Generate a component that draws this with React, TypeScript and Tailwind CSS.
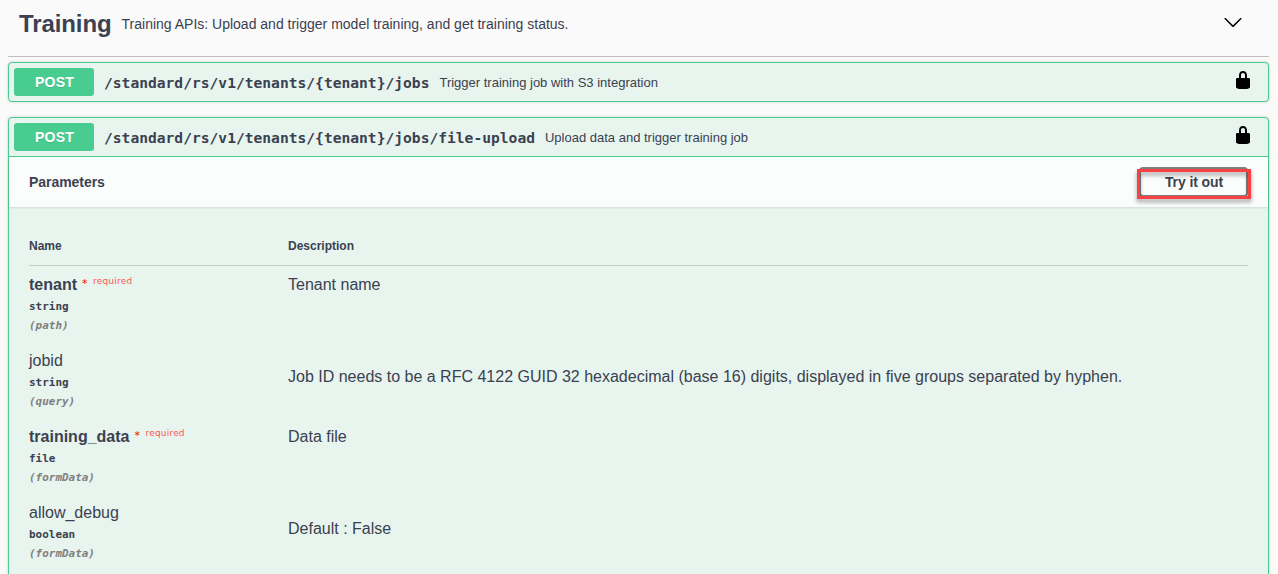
import React from "react";

const MONO = "font-['DejaVu_Sans_Mono',monospace] font-semibold";

type Param = {
  name: string;
  type: string;
  location: string;
  description: string;
  required?: boolean;
};

const params: Param[] = [
  { name: "tenant", type: "string", location: "(path)", description: "Tenant name", required: true },
  {
    name: "jobid",
    type: "string",
    location: "(query)",
    description: "Job ID needs to be a RFC 4122 GUID 32 hexadecimal (base 16) digits, displayed in five groups separated by hyphen.",
  },
  { name: "training_data", type: "file", location: "(formData)", description: "Data file", required: true },
  { name: "allow_debug", type: "boolean", location: "(formData)", description: "Default : False" },
];

function LockIcon() {
  return (
    <svg width="20" height="20" viewBox="0 0 20 20" className="shrink-0">
      <path d="M15.8 8H14V5.6C14 2.703 12.665 1 10 1 7.334 1 6 2.703 6 5.6V8H4c-.553 0-1 .646-1 1.199V17c0 .549.428 1.139.951 1.307l1.197.387C5.672 18.861 6.55 19 7.1 19h5.8c.549 0 1.428-.139 1.951-.307l1.196-.387c.524-.167.953-.757.953-1.306V9.199C17 8.646 16.352 8 15.8 8zM12 8H8V5.199C8 3.754 8.797 3 10 3c1.203 0 2 .754 2 2.199V8z" />
    </svg>
  );
}

function Summary({ path, text }: { path: string; text: string }) {
  return (
    <div className="flex h-[38px] items-center pl-[5px] pr-[15px]">
      <span className="flex h-7 w-20 shrink-0 items-center justify-center rounded-[3px] bg-[#49cc90] pl-px text-sm font-bold tracking-[0.25px] text-white [text-shadow:0_1px_0_rgba(0,0,0,0.1)]">
        POST
      </span>
      <span className={`${MONO} ml-2.5 mt-0.5 text-[14.62px] whitespace-nowrap`}>{path}</span>
      <span className="mt-0.5 ml-2.5 flex-1 text-[13px] whitespace-nowrap">{text}</span>
      <span className="-mt-1">
        <LockIcon />
      </span>
    </div>
  );
}

function ParamRow({ p }: { p: Param }) {
  return (
    <div className="flex h-[76px]">
      <div className="w-[259px] shrink-0 pt-[9px]">
        <div className={`flex h-5 items-center text-base ${p.required ? "font-bold" : "font-normal"}`}>
          <span>{p.name}</span>
          {p.required && (
            <span className="-mt-1.5 flex items-center font-['DejaVu_Sans',sans-serif] text-[9px] font-normal">
              <span className="mt-0.5 ml-[5px] w-[11px] text-[11px] leading-none text-[#ff0000]">*</span>
              <span className="tracking-[0.2px] text-[#ff5555]">required</span>
            </span>
          )}
        </div>
        <div className={`${MONO} flex h-6 items-center text-[10.96px]`}>{p.type}</div>
        <div className={`${MONO} flex h-3.5 items-center text-[10.96px] text-[#808080] italic`}>{p.location}</div>
      </div>
      <div className={`${p.required ? "pt-[9px]" : "pt-[25px]"} text-base leading-5 whitespace-nowrap`}>
        {p.description}
      </div>
    </div>
  );
}

export default function App() {
  return (
    <div className="h-[574px] overflow-hidden bg-[#fafafa] pr-[9px] pl-2 font-['Liberation_Sans',Arial,sans-serif] text-[#3b4151]">
      <header className="mb-[5px] flex h-[57px] items-center border-b border-[#bebfc1] pb-2 pr-[26px] pl-[11px]">
        <h2 className="text-2xl font-bold tracking-[-0.1px]">Training</h2>
        <p className="ml-2.5 flex-1 text-sm whitespace-nowrap">
          Training APIs: Upload and trigger model training, and get training status.
        </p>
        <svg width="20" height="20" viewBox="0 0 20 20" className="mt-[-4px]">
          <path d="M17.418 6.109c.272-.268.709-.268.979 0s.271.701 0 .969l-7.908 7.83c-.27.268-.707.268-.979 0l-7.908-7.83c-.27-.268-.27-.701 0-.969.271-.268.709-.268.979 0L10 13.25l7.418-7.141z" />
        </svg>
      </header>

      <section className="mb-[15px] rounded-sm border border-[#49cc90] bg-[#e7f5ee] shadow-[0_0_3px_rgba(0,0,0,0.19)]">
        <Summary path="/standard/rs/v1/tenants/{tenant}/jobs" text="Trigger training job with S3 integration" />
      </section>

      <section className="h-[480px] rounded-sm border border-[#49cc90] bg-[#e7f5ee] shadow-[0_0_3px_rgba(0,0,0,0.19)]">
        <div className="border-b border-[#49cc90]">
          <Summary path="/standard/rs/v1/tenants/{tenant}/jobs/file-upload" text="Upload data and trigger training job" />
        </div>
        <div className="flex h-[50px] items-center justify-between bg-[#fbfdfc] pr-[17px] pl-5 shadow-[0_1px_2px_rgba(0,0,0,0.1)]">
          <h4 className="text-sm font-bold tracking-[-0.05px]">Parameters</h4>
          <button className="relative mt-0.5 flex h-8 w-[114px] items-center justify-center text-sm font-bold">
            <span className="absolute top-0 right-[3px] left-0.5 h-[30px] rounded-[4px] border-2 border-[#808080]" />
            <span className="absolute inset-x-0 top-0.5 bottom-0 border-[3px] border-[#fa4040] drop-shadow-[0_3px_2px_rgba(0,0,0,0.4)]" />
            <span className="relative -mt-0.5 tracking-[-0.1px]">Try it out</span>
          </button>
        </div>
        <div className="px-5 pt-[26px]">
          <div className="flex h-[33px] border-b border-[#c2cfca] pt-[5px] text-xs font-bold">
            <span className="w-[259px]">Name</span>
            <span>Description</span>
          </div>
          {params.map((p) => (
            <ParamRow key={p.name} p={p} />
          ))}
        </div>
      </section>
    </div>
  );
}
